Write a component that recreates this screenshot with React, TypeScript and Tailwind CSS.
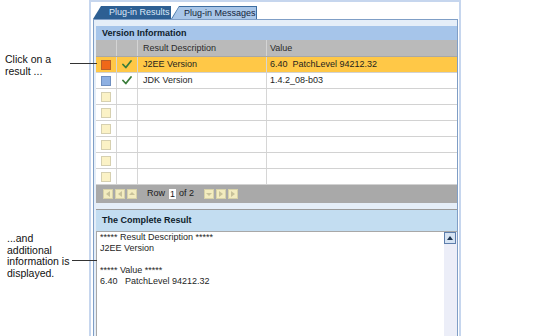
import React from "react";

const font = { fontFamily: '"Liberation Sans", Arial, sans-serif' };

function Check() {
  return (
    <svg width="10" height="9" viewBox="0 0 10 9">
      <path d="M1 4.5 L3.8 7.5 L9 1" fill="none" stroke="#3a7d3a" strokeWidth="1.8" strokeLinecap="round" strokeLinejoin="round" />
    </svg>
  );
}

function Square({ kind }: { kind: "orange" | "blue" | "empty" }) {
  const cls =
    kind === "orange"
      ? "bg-[#f06818] border-[#b8602a]"
      : kind === "blue"
      ? "bg-[#8eb0e2] border-[#6f8fc0]"
      : "bg-[#fbf2c6] border-[#d6d0b0]";
  return <div className={`w-[10px] h-[10px] border ${cls}`} />;
}

function PagerBtn({ d }: { d: string }) {
  return (
    <div className="w-[10px] h-[10px] bg-[#f3ecbf] border border-[#d8d2a8] flex items-center justify-center">
      <svg width="6" height="6" viewBox="0 0 6 6">
        <path d={d} fill="#c9c29a" />
      </svg>
    </div>
  );
}

type Row = { sq: "orange" | "blue" | "empty"; check?: boolean; desc?: string; value?: string; sel?: boolean };

const rows: Row[] = [
  { sq: "orange", check: true, desc: "J2EE Version", value: "6.40\u00a0\u00a0PatchLevel 94212.32", sel: true },
  { sq: "blue", check: true, desc: "JDK Version", value: "1.4.2_08-b03" },
  { sq: "empty" },
  { sq: "empty" },
  { sq: "empty" },
  { sq: "empty" },
  { sq: "empty" },
  { sq: "empty" },
];

export default function App() {
  return (
    <div className="w-[540px] h-[336px] bg-white flex overflow-hidden text-[#1e1e1e]" style={font}>
      {/* Annotations */}
      <div className="w-[89px] shrink-0 flex flex-col text-[10.5px] leading-[12px] text-[#111]">
        <div className="relative mt-[53px] pl-[5px]">
          <div>Click on a</div>
          <div>result ...</div>
          <div className="absolute left-[70px] top-[10px] w-[27px] h-px bg-[#333]" />
        </div>
        <div className="relative mt-[156px] pl-[7px] leading-[11.7px]">
          <div>...and</div>
          <div>additional</div>
          <div>information is</div>
          <div>displayed.</div>
          <div className="absolute left-[72px] top-[27px] w-[25px] h-px bg-[#333]" />
        </div>
      </div>

      {/* Frame */}
      <div className="w-[372px] shrink-0 border-x-2 border-t-2 border-[#c6d6ee] bg-white pl-[2px] pr-[1px] pt-[4px] flex flex-col">
        {/* Tabs */}
        <div className="flex h-[13px] text-[9px] leading-[13px]">
          <div className="w-[78px] h-[13px] bg-[#2d5f93] [clip-path:polygon(8px_0,100%_0,100%_100%,0_100%)] text-[#dce8f7] pl-[16px] whitespace-nowrap">
            Plug-in Results
          </div>
          <div className="w-[86px] h-[13px] bg-[#3e6ea2] [clip-path:polygon(8px_0,100%_0,100%_100%,0_100%)] pt-[1px] pr-[1px]">
            <div className="h-[12px] bg-[#a9c6e8] [clip-path:polygon(8px_0,100%_0,100%_100%,1px_100%)] text-[#14243a] pl-[13px] leading-[12px] whitespace-nowrap">
              Plug-in Messages
            </div>
          </div>
        </div>

        {/* Panel */}
        <div className="flex-1 border border-b-0 border-[#7f9ec6] bg-[#e5eef8] pl-[2px] pt-[6px] flex flex-col">
          <div className="h-[14px] bg-[#a6c5ea] pl-[6px] text-[9px] font-bold leading-[14px] text-[#0f1c2c]">
            Version Information
          </div>

          {/* Table */}
          <div className="bg-white text-[9px]">
            <div className="flex h-[17px] bg-[#bababa] leading-[17px] text-[#2a2a2a] border-b border-[#a8a8a8]">
              <div className="w-[21px] border-r border-[#d4d4d4]" />
              <div className="w-[21px] border-r border-[#d4d4d4]" />
              <div className="w-[129px] border-r border-[#d4d4d4] pl-[5px]">Result Description</div>
              <div className="flex-1 pl-[3px]">Value</div>
            </div>
            {rows.map((r, i) => (
              <div
                key={i}
                className={`flex h-[16px] leading-[15px] border-b border-[#d2d2d2] ${r.sel ? "bg-[#ffc847]" : "bg-white"}`}
              >
                <div className="w-[21px] border-r border-[#d6d6d6] flex items-center justify-center">
                  <Square kind={r.sq} />
                </div>
                <div className="w-[21px] border-r border-[#d6d6d6] flex items-center justify-center">
                  {r.check ? <Check /> : null}
                </div>
                <div className="w-[129px] border-r border-[#d6d6d6] pl-[5px] whitespace-nowrap">{r.desc}</div>
                <div className="flex-1 pl-[3px] whitespace-nowrap">{r.value}</div>
              </div>
            ))}
            <div className="flex h-[18px] items-center bg-[#a9a9a9] text-[9px] text-[#1a1a1a] pl-[7px]">
              <div className="flex gap-[2px]">
                <PagerBtn d="M1 0 V6 M1 3 L5 0 V6 Z" />
                <PagerBtn d="M1 3 L5 0 V6 Z" />
                <PagerBtn d="M0 4 L3 1 L6 4 Z" />
              </div>
              <span className="ml-[10px]">Row</span>
              <span className="ml-[4px] w-[7px] h-[10px] bg-white leading-[10px] text-center">1</span>
              <span className="ml-[3px]">of 2</span>
              <div className="flex gap-[2px] ml-[10px]">
                <PagerBtn d="M0 2 L3 5 L6 2 Z" />
                <PagerBtn d="M1 0 L5 3 L1 6 Z" />
                <PagerBtn d="M1 0 L5 3 L1 6 Z M5 0 V6" />
              </div>
            </div>
          </div>

          {/* Complete result */}
          <div className="mt-[6px] border-t border-[#9a9a9a] flex-1 flex flex-col">
            <div className="h-[21px] bg-[#c3ddf1] pl-[6px] text-[9px] font-bold leading-[21px] text-[#0f1c2c]">
              The Complete Result
            </div>
            <div className="flex-1 flex border-t border-l border-[#a8a8a8] bg-white">
              <div className="flex-1 pl-[3px] text-[9px] leading-[11px] text-[#1e1e1e] whitespace-pre">
                <div>***** Result Description *****</div>
                <div>J2EE Version</div>
                <div>&nbsp;</div>
                <div>***** Value *****</div>
                <div>6.40   PatchLevel 94212.32</div>
              </div>
              <div className="w-[13px] bg-[#eceef8] flex flex-col">
                <div className="w-[12px] h-[12px] border border-[#5d7eac] bg-[#d5e3f3] flex items-center justify-center">
                  <svg width="6" height="4" viewBox="0 0 6 4">
                    <path d="M0 4 L3 0 L6 4 Z" fill="#1d3552" />
                  </svg>
                </div>
              </div>
            </div>
          </div>
        </div>
      </div>
    </div>
  );
}
